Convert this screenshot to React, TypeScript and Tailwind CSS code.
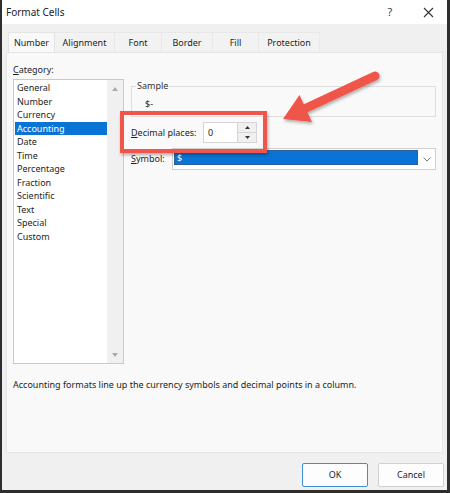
import React from "react";

const items = [
  "General",
  "Number",
  "Currency",
  "Accounting",
  "Date",
  "Time",
  "Percentage",
  "Fraction",
  "Scientific",
  "Text",
  "Special",
  "Custom",
];

const tabs: { label: string; w: string; active?: boolean }[] = [
  { label: "Number", w: "w-[47px]", active: true },
  { label: "Alignment", w: "w-[60px]" },
  { label: "Font", w: "w-[47px]" },
  { label: "Border", w: "w-[51px]" },
  { label: "Fill", w: "w-[46px]" },
  { label: "Protection", w: "w-[61px]" },
];

export default function App() {
  return (
    <div
      className="relative w-[450px] h-[493px] overflow-hidden bg-[#f0f0f0] border-l-2 border-r-[3px] border-b-[3px] border-[#2e2e2e] flex flex-col text-[#1e1e1e]"
      style={{ fontFamily: '"Noto Sans", "Open Sans", sans-serif' }}
    >
      {/* Title bar */}
      <div className="h-[24px] bg-white flex items-center pl-[4px] shrink-0">
        <span className="text-[10px] text-[#222]">Format Cells</span>
        <span className="ml-auto text-[11px] text-[#444] w-[10px] text-center mr-[28px]">?</span>
        <svg width="11" height="11" viewBox="0 0 11 11" className="mr-[13px]">
          <path d="M1 1 L10 10 M10 1 L1 10" stroke="#333" strokeWidth="1.1" />
        </svg>
      </div>

      {/* Tabs */}
      <div className="pt-[8px] pl-[6px] flex shrink-0">
        {tabs.map((t) => (
          <div
            key={t.label}
            className={
              t.active
                ? `${t.w} h-[20px] flex items-center justify-center text-[9px] bg-[#f9f9f9] border-t border-l border-r border-[#e4e4e4]`
                : `${t.w} h-[20px] flex items-center justify-center text-[9px] bg-[#f2f2f2] border-r border-t border-[#e8e8e8]`
            }
          >
            {t.label}
          </div>
        ))}
      </div>

      {/* Panel */}
      <div className="mx-[4px] h-[401px] shrink-0 bg-[#f9f9f9] border border-[#e6e6e6] flex flex-col text-[9px]">
        <div className="flex">
          {/* Left column */}
          <div className="pl-[6px] pt-[10px] w-[117px] shrink-0">
            <div className="h-[14px] leading-[14px]">
              <span className="underline">C</span>ategory:
            </div>
            <div className="mt-[2px] w-[111px] h-[285px] border border-[#c9c9c9] bg-white flex">
              <div className="flex-1 pt-[1px] pl-[1px]">
                {items.map((it) => (
                  <div
                    key={it}
                    className={
                      it === "Accounting"
                        ? "h-[13.5px] leading-[13.5px] pl-[2px] bg-[#0a74d6] text-white"
                        : "h-[13.5px] leading-[13.5px] pl-[2px]"
                    }
                  >
                    {it}
                  </div>
                ))}
              </div>
              <div className="w-[16px] bg-[#f0f0f0] flex flex-col items-center justify-between pt-[7px] pb-[6px]">
                <svg width="6" height="4" viewBox="0 0 6 4">
                  <path d="M0 4 L3 0 L6 4 Z" fill="#a9a9a9" />
                </svg>
                <svg width="6" height="4" viewBox="0 0 6 4">
                  <path d="M0 0 L3 4 L6 0 Z" fill="#a9a9a9" />
                </svg>
              </div>
            </div>
          </div>

          {/* Right column */}
          <div className="ml-[7px] pt-[33px] flex-1 mr-[6px]">
            <div className="relative h-[31px] border border-[#dedede]">
              <span className="absolute left-[4px] top-[-8px] px-[1px] bg-[#f9f9f9] leading-[14px] text-[#333]">
                Sample
              </span>
              <div className="pl-[13px] pt-[10px] leading-[14px]">$-</div>
            </div>

            <div className="mt-[5px] flex items-center h-[21px]">
              <div className="w-[72px] whitespace-nowrap">
                <span className="underline">D</span>ecimal places:
              </div>
              <div className="w-[35px] h-[21px] bg-white border border-[#d5d5d5] flex items-center pl-[4px]">
                0
              </div>
              <div className="w-[19px] h-[21px] flex flex-col border border-l-0 border-[#d5d5d5] bg-[#f0f0f0]">
                <div className="flex-1 flex items-center justify-center border-b border-[#d5d5d5]">
                  <svg width="5" height="3" viewBox="0 0 5 3">
                    <path d="M0 3 L2.5 0 L5 3 Z" fill="#333" />
                  </svg>
                </div>
                <div className="flex-1 flex items-center justify-center">
                  <svg width="5" height="3" viewBox="0 0 5 3">
                    <path d="M0 0 L2.5 3 L5 0 Z" fill="#333" />
                  </svg>
                </div>
              </div>
            </div>

            <div className="mt-[5px] flex items-center h-[22px]">
              <div className="w-[41px] whitespace-nowrap">
                <span className="underline">S</span>ymbol:
              </div>
              <div className="flex-1 h-[22px] border border-[#d0d0d0] bg-white flex">
                <div className="flex-1 mt-[1px] ml-[1px] h-[15px] bg-[#0a74d6] border border-[#2c5f9e] text-white leading-[13px] pl-[2px]">
                  $
                </div>
                <div className="w-[17px] flex items-center justify-center">
                  <svg width="8" height="5" viewBox="0 0 8 5">
                    <path d="M0.5 0.5 L4 4 L7.5 0.5" stroke="#777" strokeWidth="1" fill="none" />
                  </svg>
                </div>
              </div>
            </div>
          </div>
        </div>

        <div className="pl-[6px] mt-[14px] leading-[14px] whitespace-nowrap">
          Accounting formats line up the currency symbols and decimal points in a column.
        </div>
      </div>

      {/* Footer */}
      <div className="flex-1 flex justify-end items-start pt-[10px] pr-[3px] gap-[10px] text-[9px]">
        <button className="w-[66px] h-[24px] bg-[#fdfdfd] border border-[#3d8fd6] rounded-[2px]">OK</button>
        <button className="w-[66px] h-[24px] bg-[#fdfdfd] border border-[#d0d0d0] rounded-[2px]">Cancel</button>
      </div>

      {/* Annotation: red box */}
      <div className="absolute left-[118px] top-[111px] w-[147px] h-[42px] border-[4px] border-[#f0564c] shadow-[1px_2px_3px_rgba(0,0,0,0.3)]" />

      {/* Annotation: arrow */}
      <svg
        className="absolute left-0 top-0"
        width="450"
        height="493"
        viewBox="0 0 450 493"
      >
        <defs>
          <filter id="sh" x="-20%" y="-20%" width="140%" height="140%">
            <feDropShadow dx="1" dy="2" stdDeviation="1.5" floodColor="#000" floodOpacity="0.3" />
          </filter>
        </defs>
        <g filter="url(#sh)">
          <line x1="373" y1="76" x2="300" y2="110" stroke="#f0544a" strokeWidth="9" strokeLinecap="round" />
          <path d="M281 119 L297.5 95 L303 107 L310 122 Z" fill="#f0544a" />
        </g>
      </svg>
    </div>
  );
}
